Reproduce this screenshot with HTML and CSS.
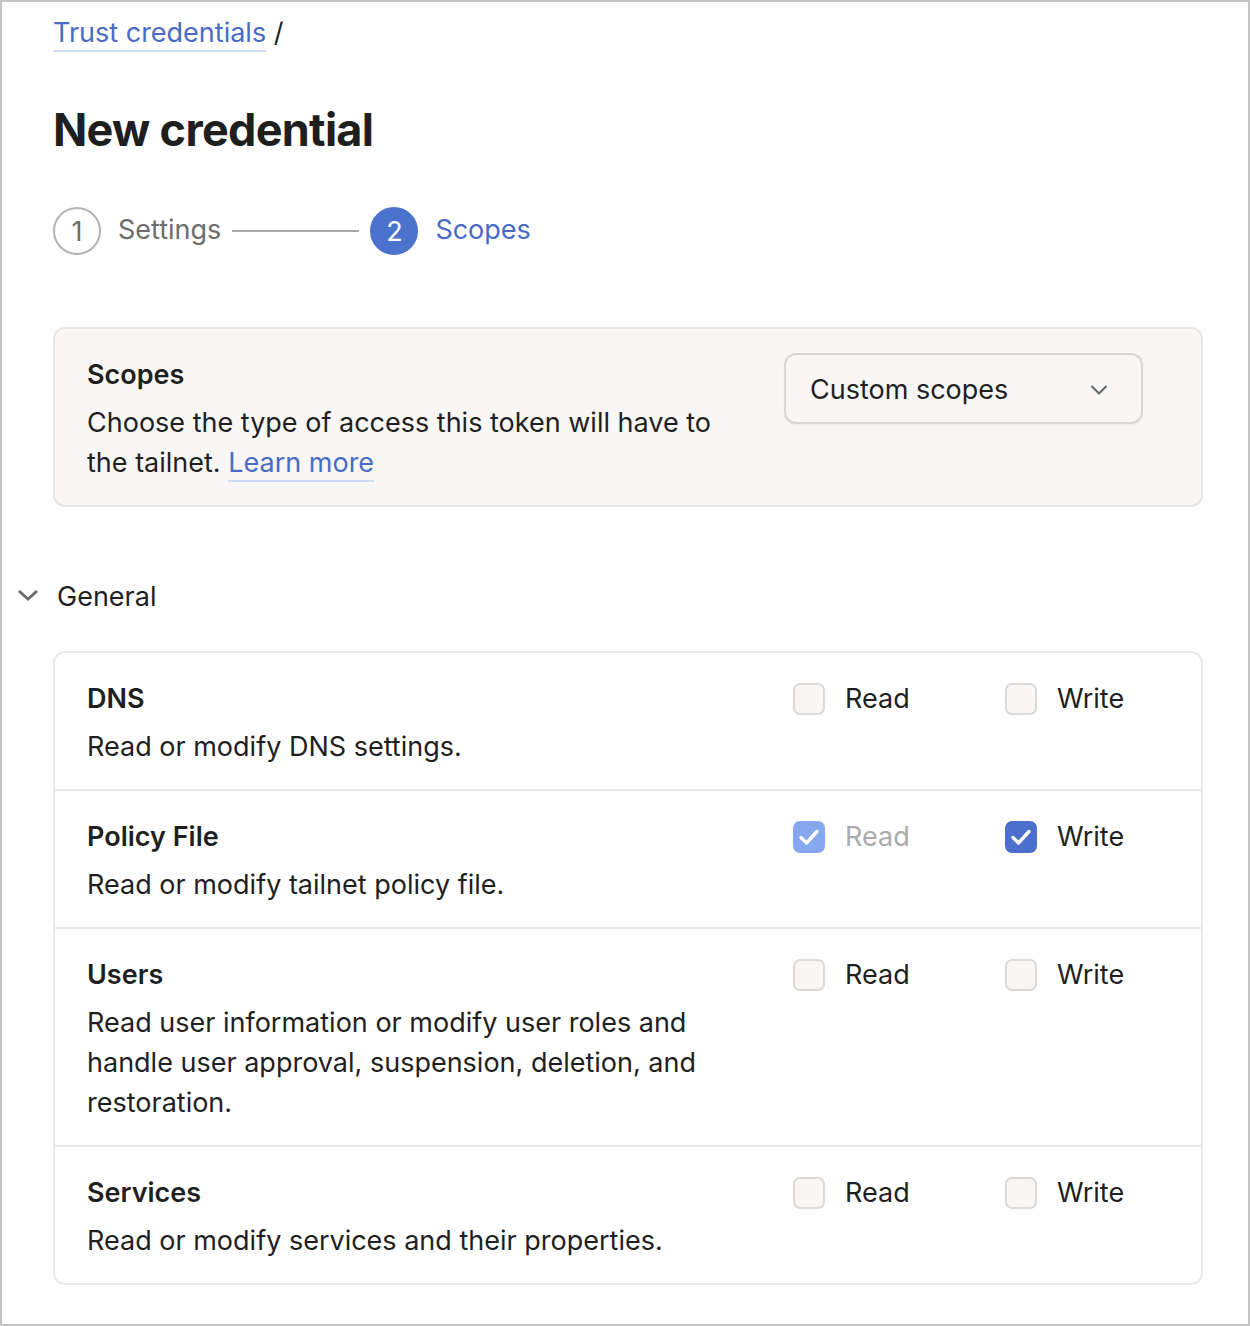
FILE: index.html
```html
<!DOCTYPE html>
<html lang="en">
<head>
    <meta charset="UTF-8">
    <meta name="viewport" content="width=device-width, initial-scale=1.0">
    <title>New credential</title>
    <link rel="stylesheet" href="styles.css">
</head>
<body>
    <div class="frame">
        <div class="page">
            <nav class="crumbs">
                <a href="#" class="link">Trust credentials</a> <span class="sep">/</span>
            </nav>
            <h1>New credential</h1>

            <div class="stepper">
                <div class="step">
                    <span class="step-num">1</span>
                    <span class="step-label">Settings</span>
                </div>
                <span class="step-line"></span>
                <div class="step active">
                    <span class="step-num">2</span>
                    <span class="step-label">Scopes</span>
                </div>
            </div>

            <div class="scope-box">
                <div class="scope-text">
                    <h2>Scopes</h2>
                    <p>Choose the type of access this token will have to the tailnet. <a href="#" class="link">Learn more</a></p>
                </div>
                <div class="select">
                    <span>Custom scopes</span>
                    <svg width="24" height="24" viewBox="0 0 24 24" fill="none" stroke="#666" stroke-width="2" stroke-linecap="round" stroke-linejoin="round"><polyline points="5 8.5 12 15.5 19 8.5"></polyline></svg>
                </div>
            </div>
        </div>

        <div class="group-head">
            <svg width="22" height="22" viewBox="0 0 22 22" fill="none" stroke="#6b6b6b" stroke-width="3" stroke-linejoin="miter"><polyline points="2 6 11 14 20 6"></polyline></svg>
            <span>General</span>
        </div>

        <div class="page">
            <div class="scope-list">
                <div class="scope-row">
                    <div class="scope-info">
                        <h3>DNS</h3>
                        <p>Read or modify DNS settings.</p>
                    </div>
                    <div class="perms">
                        <label class="perm"><span class="box"></span>Read</label>
                        <label class="perm"><span class="box"></span>Write</label>
                    </div>
                </div>
                <div class="scope-row">
                    <div class="scope-info">
                        <h3>Policy File</h3>
                        <p>Read or modify tailnet policy file.</p>
                    </div>
                    <div class="perms">
                        <label class="perm disabled"><span class="box checked"><svg width="32" height="32" viewBox="0 0 32 32" fill="none" stroke="#fff" stroke-width="3.4" stroke-linecap="round" stroke-linejoin="round"><polyline points="8 16.5 13.5 22 24 10.5"></polyline></svg></span>Read</label>
                        <label class="perm"><span class="box checked"><svg width="32" height="32" viewBox="0 0 32 32" fill="none" stroke="#fff" stroke-width="3.4" stroke-linecap="round" stroke-linejoin="round"><polyline points="8 16.5 13.5 22 24 10.5"></polyline></svg></span>Write</label>
                    </div>
                </div>
                <div class="scope-row">
                    <div class="scope-info">
                        <h3>Users</h3>
                        <p>Read user information or modify user roles and handle user approval, suspension, deletion, and restoration.</p>
                    </div>
                    <div class="perms">
                        <label class="perm"><span class="box"></span>Read</label>
                        <label class="perm"><span class="box"></span>Write</label>
                    </div>
                </div>
                <div class="scope-row">
                    <div class="scope-info">
                        <h3>Services</h3>
                        <p>Read or modify services and their properties.</p>
                    </div>
                    <div class="perms">
                        <label class="perm"><span class="box"></span>Read</label>
                        <label class="perm"><span class="box"></span>Write</label>
                    </div>
                </div>
            </div>
        </div>
    </div>
</body>
</html>
```

FILE: styles.css
```css
* {
    box-sizing: border-box;
}
body {
    font-family: Inter, "Noto Sans", sans-serif;
    font-size: 27px;
    line-height: 40px;
    color: #1f1f1f;
    margin: 0;
    padding: 0;
    background: #fff;
}
.frame {
    width: 1250px;
    height: 1326px;
    border: 2px solid #c4c4c4;
    padding-top: 11px;
}
.page {
    padding: 0 45px 0 51px;
}
.link {
    color: #4a6bc4;
    text-decoration: underline;
    text-decoration-color: #cfdcf7;
    text-decoration-thickness: 2px;
    text-underline-offset: 8px;
}
.crumbs {
    line-height: 40px;
}
.crumbs .sep {
    color: #1f1f1f;
}
h1 {
    font-size: 45px;
    line-height: 60px;
    font-weight: 700;
    letter-spacing: -0.7px;
    margin: 47px 0 47px;
}
.stepper {
    display: flex;
    align-items: center;
    height: 48px;
}
.step {
    display: flex;
    align-items: center;
    gap: 17px;
    color: #6d6d6d;
}
.step-num {
    width: 48px;
    height: 48px;
    border-radius: 50%;
    border: 2px solid #b3b3b3;
    display: flex;
    align-items: center;
    justify-content: center;
    font-size: 27px;
    color: #6d6d6d;
    padding-top: 2px;
}
.step-label {
    margin-top: -3px;
}
.step.active {
    color: #4a6bc4;
}
.step.active .step-num {
    background: #4b72cc;
    border-color: #4b72cc;
    color: #fff;
}
.step-line {
    width: 127px;
    height: 2px;
    background: #a8a8a8;
    margin: 0 11px;
}
.scope-box {
    margin-top: 72px;
    background: #f8f7f6;
    border: 2px solid #e9e7e5;
    border-radius: 12px;
    padding: 24px 58px 24px 32px;
    display: flex;
    justify-content: space-between;
    align-items: flex-start;
}
.scope-text {
    width: 640px;
    margin: 2px 0 -2px;
}
h2 {
    font-size: 27px;
    font-weight: 600;
    margin: 0 0 8px;
    line-height: 40px;
}
.scope-text p {
    margin: 0;
}
.select {
    width: 359px;
    height: 71px;
    border: 2px solid #d9d6d3;
    border-radius: 12px;
    background: #f8f7f6;
    display: flex;
    align-items: center;
    justify-content: space-between;
    padding: 2px 30px 0 24px;
    box-shadow: 0 1px 2px rgba(0, 0, 0, 0.05);
}
.group-head {
    display: flex;
    align-items: center;
    gap: 18px;
    padding-left: 15px;
    margin: 70px 0 34px;
}
.group-head svg {
    margin-top: -2px;
}
.scope-list {
    border: 2px solid #eae9e8;
    border-radius: 12px;
}
.scope-row {
    display: flex;
    justify-content: space-between;
    padding: 26px 0 22px 32px;
    border-top: 2px solid #eae9e8;
}
.scope-row:first-child {
    border-top: none;
}
.scope-info {
    width: 640px;
}
h3 {
    font-size: 27px;
    font-weight: 600;
    margin: 0 0 8px;
    line-height: 40px;
}
.scope-info p {
    margin: 0;
}
.perms {
    display: flex;
    width: 408px;
    align-items: flex-start;
}
.perm {
    display: flex;
    align-items: center;
    gap: 20px;
    height: 40px;
}
.perm:first-child {
    width: 212px;
}
.perm + .perm {
    width: 196px;
}
.box {
    width: 32px;
    height: 32px;
    border: 2px solid #dcd9d6;
    border-radius: 7px;
    background: #f8f7f6;
    display: flex;
    align-items: center;
    justify-content: center;
}
.box.checked {
    border: none;
    background: #4b70cc;
}
.perm.disabled {
    color: #ababab;
}
.perm.disabled .box.checked {
    background: #86a8f0;
}
```
